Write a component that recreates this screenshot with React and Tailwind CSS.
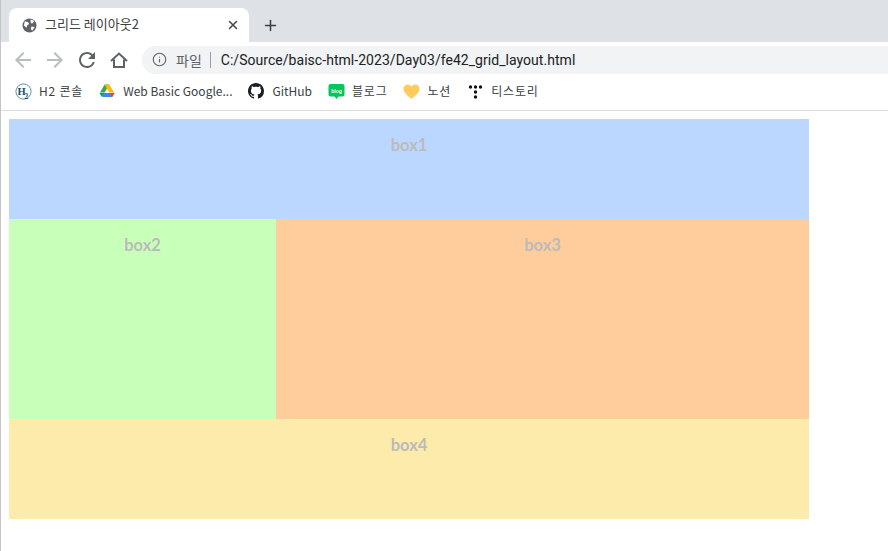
import { Info, Plus, X } from 'lucide-react'

function Bookmark({ icon, label, korean }) {
  return (
    <div className="flex items-center gap-[8px]">
      <div className="w-[16px] h-[17px] flex items-center justify-center">{icon}</div>
      <span className={`text-[12px] text-[#3c4043] ${korean ? 'tracking-[0.8px]' : ''}`}>{label}</span>
    </div>
  )
}

function Box({ label, className }) {
  return (
    <div className={`pt-[15px] text-center font-['Lato',sans-serif] font-bold text-[16.5px] leading-[22px] text-[#bbbbbb] ${className}`}>
      {label}
    </div>
  )
}

const h2Icon = (
  <svg viewBox="0 0 17 17" className="w-[17px] h-[17px] shrink-0">
    <circle cx="8.5" cy="8.5" r="7.6" fill="none" stroke="#5f8fa8" strokeWidth="1" />
    <text x="2.5" y="11.5" fontSize="10.500" fontWeight="700" fontFamily="Liberation Serif" fill="#1d4d6b">H</text>
    <text x="9.500" y="15.500" fontSize="7.500" fontWeight="700" fontFamily="Liberation Serif" fill="#1d4d6b">2</text>
  </svg>
)

const driveIcon = (
  <svg viewBox="0 0 17 17" className="w-[16px] h-[16px]">
    <path d="M6 1.5h5l-5 8.5H1z" fill="#34a853" />
    <path d="M6 1.5h5l5 8.5h-5z" fill="#fbbc04" />
    <path d="M4 10.5h12.5L14 15H3.500z" fill="#4285f4" />
    <path d="M0.500 10.500h5L3 15z" fill="#0f9d58" />
    <path d="M11 10.500h5.500L14 15z" fill="#ea4335" />
  </svg>
)

const githubIcon = (
  <svg viewBox="0 0 16 16" className="w-[16px] h-[16px]" fill="#1b1f23">
    <path d="M8 0C3.580 0 0 3.580 0 8c0 3.540 2.290 6.530 5.470 7.590.4.070.55-.17.55-.38 0-.19-.01-.82-.01-1.490-2.010.370-2.530-.49-2.690-.94-.09-.23-.48-.94-.82-1.130-.28-.15-.68-.52-.01-.53.630-.01 1.080.58 1.230.82.720 1.210 1.870.87 2.330.66.070-.52.280-.87.510-1.070-1.780-.2-3.640-.89-3.640-3.950 0-.87.310-1.590.82-2.150-.08-.2-.36-1.020.08-2.120 0 0 .67-.21 2.200.82.640-.18 1.320-.27 2-.27s1.360.09 2 .27c1.530-1.040 2.200-.82 2.200-.82.440 1.100.160 1.920.080 2.120.510.560.820 1.270.820 2.150 0 3.070-1.870 3.750-3.650 3.950.290.250.540.730.540 1.480 0 1.070-.01 1.930-.01 2.200 0 .21.150.46.550.38A8.010 8.010 0 0 0 16 8c0-4.420-3.580-8-8-8z" />
  </svg>
)

const blogIcon = (
  <svg viewBox="0 0 17 17" className="w-[17px] h-[17px] shrink-0">
    <path d="M2.500 1h12A2 2 0 0 1 16.500 3v8.500a2 2 0 0 1-2 2h-4L8.500 16l-2-2.500h-4a2 2 0 0 1-2-2V3a2 2 0 0 1 2-2z" fill="#03c75a" />
    <text x="8.500" y="9.500" textAnchor="middle" fontSize="5" fontWeight="700" fontFamily="Liberation Sans" fill="#ffffff">blog</text>
  </svg>
)

const heartIcon = (
  <svg viewBox="0 0 17 17" className="w-[17px] h-[17px] shrink-0">
    <path d="M8.500 16C5 13 .5 10 .5 5.800 .5 3.200 2.500 1.500 4.600 1.500c1.700 0 3 .9 3.900 2.300.9-1.400 2.200-2.300 3.900-2.300 2.100 0 4.100 1.700 4.100 4.300C16.500 10 12 13 8.500 16z" fill="#ffcb5c" />
  </svg>
)

const tistoryIcon = (
  <svg viewBox="0 0 17 17" className="w-[17px] h-[17px] shrink-0" fill="#111111">
    <circle cx="3.500" cy="4" r="1.700" />
    <circle cx="8.500" cy="4" r="1.700" />
    <circle cx="13.500" cy="4" r="1.700" />
    <circle cx="8.500" cy="9" r="1.700" />
    <circle cx="8.500" cy="14" r="1.700" />
  </svg>
)

export default function App() {
  return (
    <div className="relative w-[888px] h-[551px] overflow-hidden bg-white font-['Noto_Sans_CJK_KR','Liberation_Sans',sans-serif]">
      {/* window edge */}
      <div className="absolute left-0 top-0 bottom-0 w-px bg-[#c4c4c4]" />
      {/* tab strip */}
      <div className="h-[42px] bg-[#dee1e6] flex items-end pl-[9px]">
        <div className="w-[240px] h-[34px] bg-white rounded-t-[8px] flex items-center pl-[13px] pr-[9px]">
          <svg viewBox="0 0 16 16" className="w-[15px] h-[15px]">
            <circle cx="8" cy="8" r="7.500" fill="#5f6368" />
            <path d="M3 3.500l3.500 1 1 2-2 1.500-.5 2.500L2 8zM9 1.500l4 1.500-1.500 2.500H9.500zM10 9l3.500.5-2.500 4-1.500-1.500z" fill="#ffffff" />
          </svg>
          <span className="ml-[8px] flex-1 text-[13px] leading-[16px] pb-[2px] text-[#3c4043]">그리드 레이아웃2</span>
          <X size={14} strokeWidth={2.500} className="text-[#44474b]" />
        </div>
        <Plus size={17} strokeWidth={2.200} className="ml-[13px] mb-[8px] text-[#3c4043]" />
      </div>
      {/* toolbar */}
      <div className="h-[35px] flex items-center pl-[15px] pr-0">
        <svg viewBox="4 4 16 16" className="w-[16px] h-[16px]" fill="#babcbe">
          <path d="M20 11H7.830l5.590-5.590L12 4l-8 8 8 8 1.410-1.410L7.830 13H20v-2z" />
        </svg>
        <svg viewBox="4 4 16 16" className="ml-[16px] w-[16px] h-[16px]" fill="#babcbe">
          <path d="M12 4l-1.410 1.410L16.170 11H4v2h12.170l-5.580 5.590L12 20l8-8z" />
        </svg>
        <svg viewBox="4 4 16 16" className="ml-[16px] w-[16px] h-[16px]" fill="#5f6368">
          <path d="M17.650 6.350A7.958 7.958 0 0 0 12 4c-4.420 0-7.990 3.580-7.990 8s3.570 8 7.990 8c3.730 0 6.840-2.550 7.730-6h-2.080A5.990 5.990 0 0 1 12 18c-3.310 0-6-2.690-6-6s2.690-6 6-6c1.660 0 3.140.690 4.220 1.780L13 11h7V4l-2.350 2.350z" />
        </svg>
        <svg viewBox="0 0 18 18" className="ml-[15px] w-[18px] h-[18px]" fill="none" stroke="#5f6368" strokeWidth="2">
          <path d="M4 8.500V16h10V8.500M1 10l8-7.500 8 7.500" />
        </svg>
        <div className="ml-[14px] flex-1 h-[28px] bg-[#f1f3f4] rounded-l-[14px] flex items-center pl-[10px]">
          <Info size={15} strokeWidth={1.800} className="text-[#5f6368]" />
          <span className="ml-[9px] text-[14px] leading-[18px] text-[#5f6368]">파일</span>
          <span className="ml-[8px] w-px h-[16px] bg-[#9aa0a6]" />
          <span className="ml-[10px] pt-[2px] text-[14px] tracking-[0.04px] text-[#202124] font-['Roboto',sans-serif]">C:/Source/baisc-html-2023/Day03/fe42_grid_layout.html</span>
        </div>
      </div>
      {/* bookmarks */}
      <div className="h-[34px] pb-[5px] border-b border-[#d9dadc] flex items-center gap-[16px] pl-[15px]">
        <Bookmark icon={h2Icon} label="H2 콘솔" korean />
        <Bookmark icon={driveIcon} label="Web Basic Google..." />
        <Bookmark icon={githubIcon} label="GitHub" />
        <Bookmark icon={blogIcon} label="블로그" korean />
        <Bookmark icon={heartIcon} label="노션" korean />
        <Bookmark icon={tistoryIcon} label="티스토리" korean />
      </div>
      {/* page */}
      <div className="pt-[8px] pl-[9px]">
        <div className="w-[800px] grid grid-cols-[267px_533px] grid-rows-[100px_200px_100px]">
          <Box label="box1" className="col-span-2 bg-[#bcd7ff]" />
          <Box label="box2" className="bg-[#c8ffb9]" />
          <Box label="box3" className="bg-[#ffcd9b]" />
          <Box label="box4" className="col-span-2 bg-[#fdebab]" />
        </div>
      </div>
    </div>
  )
}
